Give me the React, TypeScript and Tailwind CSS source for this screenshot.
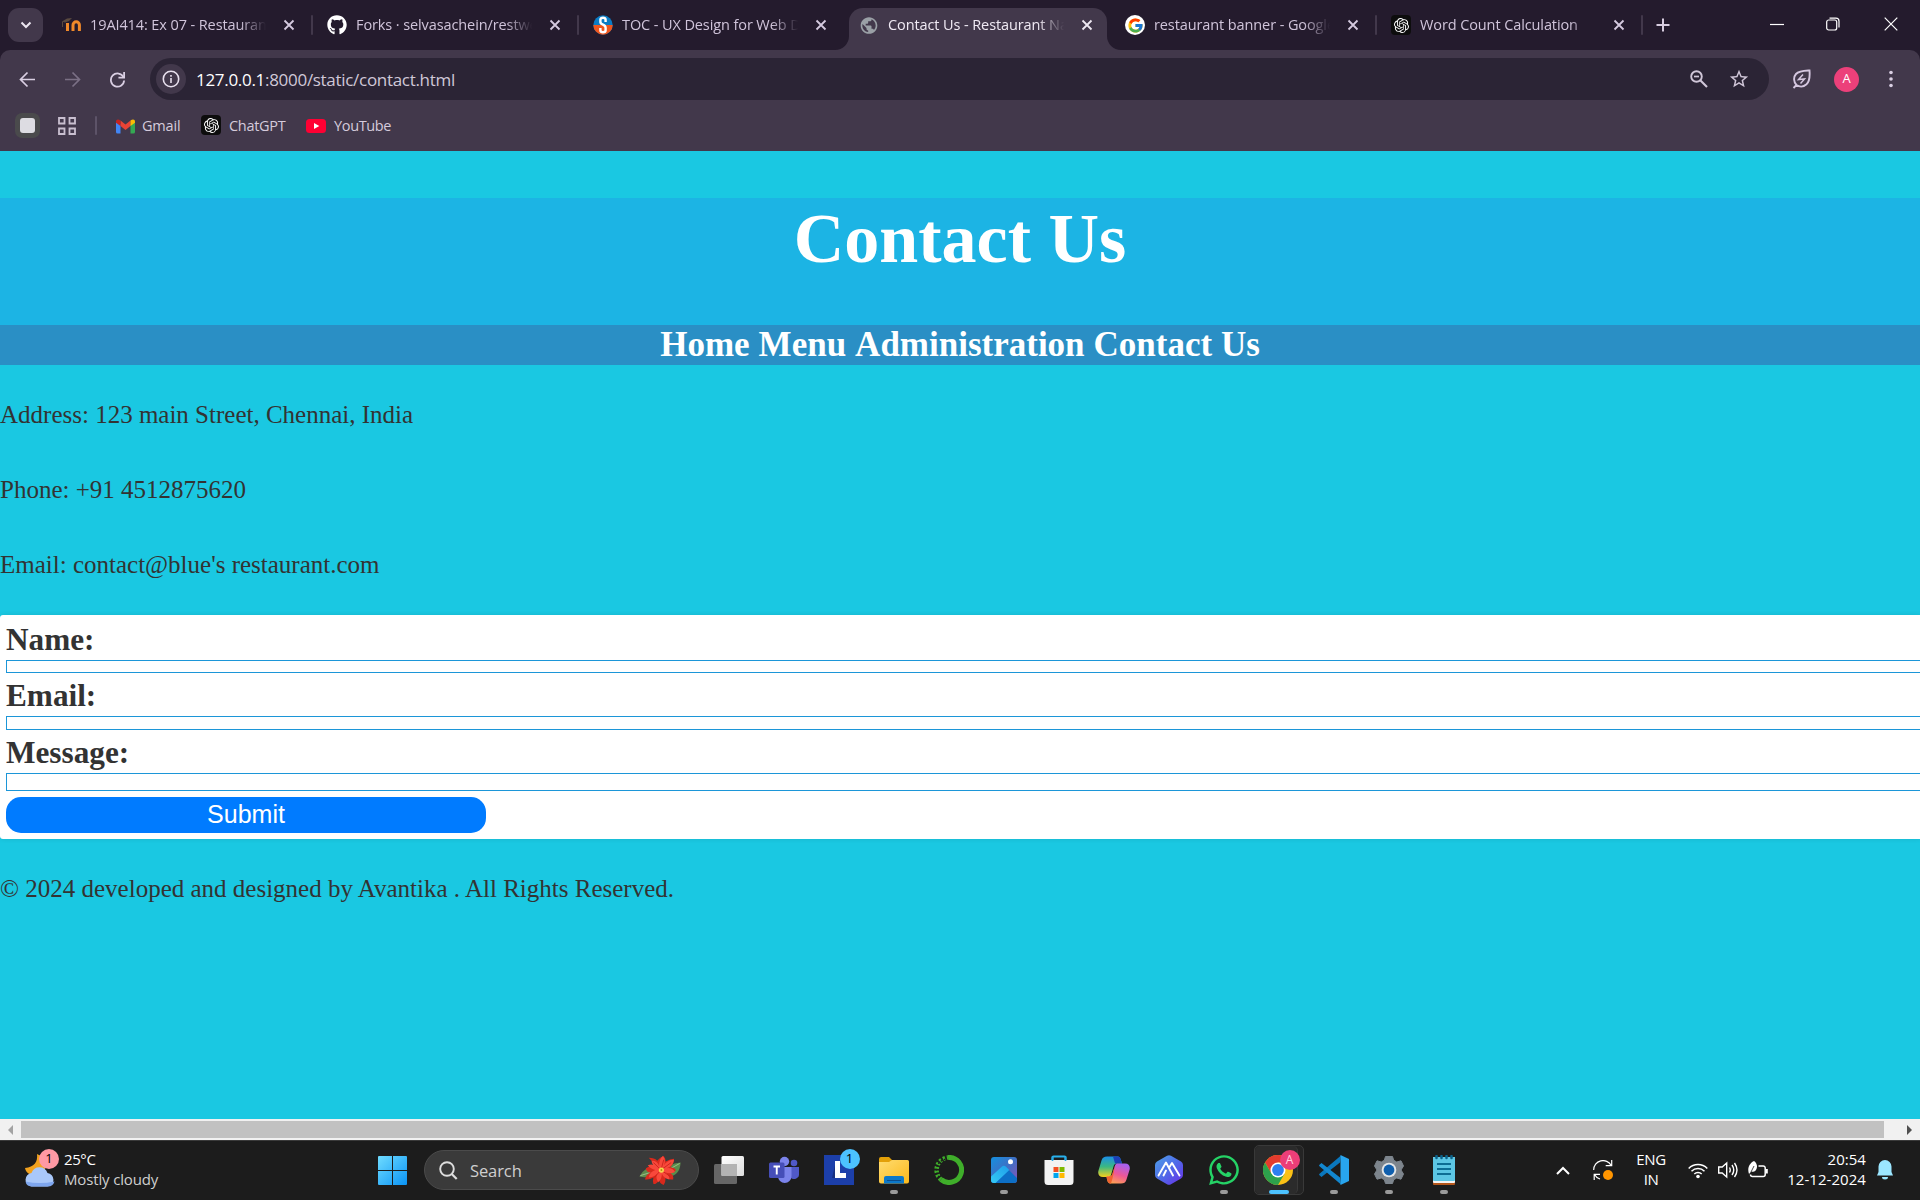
import type { ReactNode } from "react";
import { FaGithub, FaWhatsapp } from "react-icons/fa";
import { FcGoogle } from "react-icons/fc";
import { SiOpenai } from "react-icons/si";
import { MdStarBorder, MdPublic } from "react-icons/md";

const CloseX = ({ bright }: { bright?: boolean }) => (
  <svg width="12" height="12" viewBox="0 0 12 12" className={bright ? "text-[#eee8f2]" : "text-[#d5cadf]"}>
    <path d="M1.5 1.5l9 9M10.5 1.5l-9 9" stroke="currentColor" strokeWidth="1.8" />
  </svg>
);

const Moodle = () => (
  <svg width="20" height="20" viewBox="0 0 20 20">
    <path d="M6.500 16V8M12 16V10a3.200 3.200 0 0 1 6.400 0V16" fill="none" stroke="#f0892a" strokeWidth="3" />
    <path d="M1 6.500l5-3 5-.5-3 3-4 1.500z" fill="#5a4a40" />
    <path d="M1.500 6.500V12" stroke="#5a4a40" />
  </svg>
);

const SLogo = () => (
  <svg width="20" height="20" viewBox="0 0 20 20">
    <circle cx="10" cy="10" r="9.700" fill="#0b7cc4" />
    <path d="M.3 10a9.700 9.700 0 0 0 19.400 0z" fill="#f0561d" />
    <path d="M12.600 7V4.800q0-2-2.600-2t-2.600 2V7q0 1.600 2.600 2.700T12.600 12.800v2.400q0 2-2.600 2t-2.600-2V13" fill="none" stroke="#fff" strokeWidth="2.400" />
  </svg>
);

const GptTile = () => (
  <span className="flex size-5 items-center justify-center rounded-[4px] bg-[#0d0d0d]">
    <SiOpenai size={15} color="#fff" />
  </span>
);

type TabProps = { icon: ReactNode; title: string; active?: boolean; sep?: boolean };

const Tab = ({ icon, title, active, sep }: TabProps) => (
  <div
    className={
      "relative flex h-[42px] w-[258px] shrink-0 items-center rounded-t-[14px] pb-[8px] pl-[10px] " +
      (active ? "bg-[#42384b]" : "")
    }
  >
    <span className="flex size-5 shrink-0 items-center justify-center">{icon}</span>
    <span
      className={
        "ml-[9px] w-[178px] overflow-hidden whitespace-nowrap text-[14.5px] leading-[20px] tracking-[-0.1px] [mask-image:linear-gradient(to_right,black_84%,transparent_99%)] " +
        (active ? "text-[#f0eaf4]" : "text-[#d0c4da]")
      }
    >
      {title}
    </span>
    <span className="ml-[15px] flex">
      <CloseX bright={active} />
    </span>
    {sep && <span className="absolute top-[7px] -right-[4px] h-5 w-[2px] rounded bg-[#42384b]" />}
    {active && (
      <>
        <svg className="absolute bottom-0 -left-[14px]" width="14" height="14">
          <path d="M14 0v14H0A14 14 0 0 0 14 0z" fill="#42384b" />
        </svg>
        <svg className="absolute -right-[14px] bottom-0" width="14" height="14">
          <path d="M0 0v14h14A14 14 0 0 1 0 0z" fill="#42384b" />
        </svg>
      </>
    )}
  </div>
);

const TabStrip = () => (
  <div className="flex h-[50px] items-end bg-[#241b2d]">
    <button className="mb-[8px] ml-[8px] flex h-[34px] w-[35px] items-center justify-center rounded-[11px] bg-[#42384b]">
      <svg width="12" height="8" viewBox="0 0 12 8">
        <path d="M1.500 1.500L6 6l4.500-4.500" fill="none" stroke="#ece6f0" strokeWidth="2" />
      </svg>
    </button>
    <div className="ml-[8px] flex gap-[8px]">
      <Tab icon={<Moodle />} title="19AI414: Ex 07 - Restaurant Website" sep />
      <Tab icon={<FaGithub size={20} color="#fff" />} title="Forks · selvasachein/restweb" sep />
      <Tab icon={<SLogo />} title="TOC - UX Design for Web Dev" />
      <Tab icon={<MdPublic size={21} color="#9aa0a6" />} title="Contact Us - Restaurant Name" active />
      <Tab
        icon={
          <span className="flex size-5 items-center justify-center rounded-full bg-white">
            <FcGoogle size={17} />
          </span>
        }
        title="restaurant banner - Google Search"
        sep
      />
      <Tab icon={<GptTile />} title="Word Count Calculation" sep />
    </div>
    <svg className="mb-[18px] ml-[17px]" width="14" height="14">
      <path d="M7 .5v13M.5 7h13" stroke="#d8cde0" strokeWidth="2" />
    </svg>
    <div className="mr-[22px] mb-[18px] ml-auto flex h-4 items-center">
      <svg width="14" height="14">
        <path d="M0 7.500h14" stroke="#fff" strokeWidth="1.200" />
      </svg>
      <svg className="ml-[42px]" width="14" height="14" viewBox="0 0 14 14" fill="none" stroke="#fff" strokeWidth="1.200">
        <rect x=".7" y="3" width="10" height="10" rx="2" />
        <path d="M3.500 1.200h6.500a3 3 0 0 1 3 3V10.500" />
      </svg>
      <svg className="ml-[44px]" width="14" height="14">
        <path d="M.7.7l12.600 12.600M13.300.7L.7 13.300" stroke="#fff" strokeWidth="1.200" />
      </svg>
    </div>
  </div>
);

const Toolbar = () => (
  <div className="bg-[#241b2d]">
    <div className="flex h-[58px] items-center rounded-t-[10px] bg-[#42384b]">
      <svg className="ml-[19px]" width="17" height="17" viewBox="0 0 17 17" fill="none" stroke="#dacfe3" strokeWidth="1.700">
        <path d="M16 8.500H2M8.500 1.500l-7 7 7 7" />
      </svg>
      <svg className="ml-[28px]" width="17" height="17" viewBox="0 0 17 17" fill="none" stroke="#7b7085" strokeWidth="1.700">
        <path d="M1 8.500h14M8.500 1.500l7 7-7 7" />
      </svg>
      <svg className="ml-[28px]" width="17" height="17" viewBox="0 0 18 18" fill="none" stroke="#dacfe3" strokeWidth="1.900">
        <path d="M15.300 6.500A7 7 0 1 0 16 10" />
        <path d="M16 1v6h-6" />
      </svg>
      <div className="ml-[24px] flex h-[42px] w-[1619px] items-center rounded-full bg-[#2b2435] pl-[6px]">
        <span className="flex size-[30px] items-center justify-center rounded-full bg-[#42384b]">
          <svg width="18" height="18" viewBox="0 0 18 18" fill="none" stroke="#e8e0ee" strokeWidth="1.600">
            <circle cx="9" cy="9" r="7.700" />
            <path d="M9 8v5M9 5v1.700" />
          </svg>
        </span>
        <span className="ml-[10px] pt-px text-[17px] leading-[24px] tracking-[-0.3px] text-[#d0c8d8]">
          <span className="text-white">127.0.0.1</span>:8000/static/contact.html
        </span>
        <svg className="ml-auto" width="18" height="18" viewBox="0 0 18 18" fill="none" stroke="#d0c6d8">
          <circle cx="6.500" cy="6.500" r="5.300" strokeWidth="1.900" />
          <path d="M10.500 10.500l6.500 6.500" strokeWidth="2.100" />
          <path d="M4 6.500h5" strokeWidth="1.700" />
        </svg>
        <MdStarBorder className="mr-[19px] ml-[20px]" size={22} color="#d0c6d8" />
      </div>
      <svg className="ml-[23px]" width="20" height="20" viewBox="0 0 20 20" fill="none" stroke="#d5c7e0" strokeWidth="1.900">
        <path d="M4.500 16C1.500 13 1.300 8 4 5c3-3.200 7.500-3.200 13.500-3.500.5 6 .5 10.500-3 13.800-3 2.700-7 2.700-10 .7zM1.500 19l3-3" />
        <path d="M11 5.500L6.500 10.500l6-.5L8.500 14.500" strokeWidth="1.500" />
      </svg>
      <span className="ml-[22px] flex size-[25px] items-center justify-center rounded-full bg-[#ec407a] text-[13px] text-white">A</span>
      <svg className="ml-[29px]" width="6" height="18" fill="#dacfe3">
        <circle cx="3" cy="2.500" r="1.800" />
        <circle cx="3" cy="9" r="1.800" />
        <circle cx="3" cy="15.500" r="1.800" />
      </svg>
    </div>
    <div className="flex h-[43px] items-start bg-[#42384b] pt-[5px] text-[14.5px] leading-[25px] text-[#d5cbdc]">
      <span className="ml-[15px] flex size-[25px] items-center justify-center rounded-[7px] bg-[#4a4a4c]">
        <span className="size-[15px] rounded-[3px] bg-[#dddce2]" />
      </span>
      <svg className="mt-[4px] ml-[18px]" width="18" height="18" fill="none" stroke="#c9bfd0" strokeWidth="1.800">
        <path d="M1 1h5.500v5.500H1zM11.500 1H17v5.500h-5.500zM1 11.500h5.500V17H1zM11.500 11.500H17V17h-5.500z" />
      </svg>
      <span className="mt-[3px] ml-[19px] h-[19px] w-[2px] rounded bg-[#5d5368]" />
      <svg className="mt-[6px] ml-[19px]" width="19" height="15" viewBox="0 0 19 15">
        <path d="M0 2.500V13a1.500 1.500 0 0 0 1.500 1.500h3V5z" fill="#4285f4" />
        <path d="M19 2.500V13a1.500 1.500 0 0 1-1.500 1.500h-3V5z" fill="#34a853" />
        <path d="M4.500 1.500l5 4 5-4V7l-5 4-5-4z" fill="#ea4335" />
        <path d="M0 2.500C0 .3 2.300-.3 4.500 1.500V7L0 3.700z" fill="#c5221f" />
        <path d="M19 2.500c0-2.200-2.300-2.800-4.500-1V7L19 3.700z" fill="#fbbc04" />
      </svg>
      <span className="ml-[7px] w-[59px] tracking-[-0.2px]">Gmail</span>
      <span className="mt-[2px]"><GptTile /></span>
      <span className="ml-[8px] w-[77px] tracking-[-0.3px]">ChatGPT</span>
      <svg className="mt-[6px]" width="20" height="14" viewBox="0 0 20 14">
        <rect width="20" height="14" rx="3.500" fill="#ff0033" />
        <path d="M8 4l5.300 3L8 10z" fill="#fff" />
      </svg>
      <span className="ml-[8px] tracking-[-0.35px]">YouTube</span>
    </div>
  </div>
);

const Field = ({ label, box }: { label: string; box: string }) => (
  <>
    <label className="block h-[39px] pt-px text-[31.25px] leading-[36px] font-bold">{label}</label>
    <div className={"border border-r-0 border-[#1c96d8] bg-white " + box} />
  </>
);

const Page = () => (
  <main className="h-[968px] overflow-hidden bg-[#1ac8e2] pt-[47px] font-['Liberation_Serif',serif] text-[25px] leading-[28px] text-[#333333]">
    <header className="h-[127px] bg-[#1cb4e4] text-center">
      <h1 className="text-[70px] leading-[81px] font-bold text-white">Contact Us</h1>
    </header>
    <nav className="flex h-10 justify-center gap-[9px] bg-[#2a8fc5] text-[35px] leading-[40px] font-bold text-white">
      <a>Home</a>
      <a>Menu</a>
      <a>Administration</a>
      <a>Contact Us</a>
    </nav>
    <section className="my-9 flex flex-col gap-[47px]">
      <p>Address: 123 main Street, Chennai, India</p>
      <p>Phone: +91 4512875620</p>
      <p>Email: contact@blue's restaurant.com</p>
    </section>
    <form className="h-[224px] rounded-l-[3px] bg-white pt-[6px] pl-[6px] shadow-[0_0_5px_rgba(0,0,0,0.1)]">
      <Field label="Name:" box="h-[13px] mb-1" />
      <Field label="Email:" box="h-[14px] mb-1" />
      <Field label="Message:" box="h-[18px] mb-[6px]" />
      <button type="button" className="block h-9 w-[480px] rounded-[15px] bg-[#007bff] pb-px font-['Liberation_Sans',sans-serif] text-[25px] leading-[35px] text-white">
        Submit
      </button>
    </form>
    <footer className="mt-[36px]">© 2024 developed and designed by Avantika . All Rights Reserved.</footer>
  </main>
);

const ScrollBar = () => (
  <div className="flex h-[21px] items-center bg-[#f1f1f1]">
    <svg className="ml-[8px]" width="5" height="10"><path d="M5 0v10L0 5z" fill="#a3a3a3" /></svg>
    <div className="ml-[8px] h-[17px] w-[1863px] bg-[#c1c1c1]" />
    <svg className="ml-[23px]" width="5" height="10"><path d="M0 0v10l5-5z" fill="#505050" /></svg>
  </div>
);

const Poinsettia = () => (
  <svg width="46" height="30" viewBox="0 0 46 32">
    <path d="M1 23Q6 13 17 12L21 17Q13 26 1 23z" fill="#5d8a4b" />
    <path d="M45 8Q44 23 31 23L26 18Q31 9 45 8z" fill="#5a8e4c" />
    <path d="M2 22L18 17M44 9L28 18" stroke="#9fc08c" />
    <path d="M23 16L11 3q6 0 9 3 3-4 7-5 2 3 2 6 5-3 9-3 0 5-4 9 4 0 6 3-2 4-6 3 4 3 3 7-5 1-8-2 0 5-2 8-5-2-5-6-2 5-6 5-1-4 0-7-5 3-9 2 1-5 6-7-5-1-5-5 4-3 7-1z" fill="#d9291c" />
    <path d="M23 16Q14 12 14 6q7 0 8 6 0-8 4-11 4 4 1 10 4-6 11-6-1 7-8 9 6-1 9 4-6 3-11 0 5 3 5 8-6-1-8-6 0 6-4 9-3-5-1-9-4 4-9 4 1-6 7-8-5-1-8-5 5-2 8 1z" fill="#f8483b" />
    <path d="M24 16l3-11M24 16l10 7M24 16l-7 8M24 16l11-8M24 16l-8-8" stroke="#c01c14" strokeWidth=".8" />
    <circle cx="24.500" cy="16" r="2.800" fill="#f5d44c" />
    <circle cx="24.500" cy="16" r="1" fill="#b98a14" />
  </svg>
);

const TaskView = () => (
  <svg width="30" height="30">
    <defs>
      <linearGradient id="tv" x1="0" y1="0" x2="1" y2="1"><stop offset="0" stopColor="#fff" /><stop offset="1" stopColor="#dcdcdc" /></linearGradient>
    </defs>
    <rect y="9" width="23" height="20" rx="1.500" fill="#666" />
    <rect x="7.500" y="1" width="22.500" height="20" rx="1.500" fill="url(#tv)" />
    <path d="M7.500 9H23v12H7.500z" fill="#b3b3b3" />
  </svg>
);

const Teams = () => (
  <svg width="30" height="30" viewBox="0 0 30 30">
    <circle cx="25" cy="8" r="3.300" fill="#5059c9" />
    <path d="M20 12h10v8a5 5 0 0 1-8 3z" fill="#5059c9" />
    <circle cx="15.500" cy="6.500" r="4.700" fill="#7b83eb" />
    <path d="M9 12h13.500v9a6.750 7 0 0 1-13.500 0z" fill="#7b83eb" />
    <rect y="7.500" width="15.500" height="15.500" rx="1.500" fill="#464eb8" />
    <path d="M4.500 11.500h6.500M7.750 11.500v8" stroke="#fff" strokeWidth="1.900" />
  </svg>
);

const LApp = () => (
  <span className="relative flex size-[30px] items-center justify-center bg-[#1c3faa]">
    <svg width="30" height="30"><path d="M11 6h5v12h6v5H11z" fill="#fff" /><path d="M11 10l-3 13h3z" fill="#17307f" /></svg>
    <span className="absolute -top-[6px] left-4 flex size-5 items-center justify-center rounded-full bg-[#4cc2ff] text-[13px] text-black">1</span>
  </span>
);

const Explorer = () => (
  <svg width="30" height="30" viewBox="0 0 30 30">
    <defs>
      <linearGradient id="ex" x1="0" y1="0" x2="1" y2="1"><stop offset="0" stopColor="#ffdc70" /><stop offset="1" stopColor="#fbb91c" /></linearGradient>
    </defs>
    <path d="M0 4a2 2 0 0 1 2-2h8l3 3v5H0z" fill="#e3a008" />
    <path d="M0 7h10l3-2h15.500A1.500 1.500 0 0 1 30 6.500v20a2 2 0 0 1-2 2H2a2 2 0 0 1-2-2z" fill="url(#ex)" />
    <path d="M5 23a2 2 0 0 1 2-2h16a2 2 0 0 1 2 2v5.500H5z" fill="#0c78c9" />
    <path d="M8 25.500h14" stroke="#0a4d8c" />
  </svg>
);

const Anaconda = () => (
  <svg width="30" height="30" viewBox="0 0 30 30" fill="none" stroke="#3fae2a">
    <path d="M14 2.500a12.500 12.500 0 1 1-7 22" strokeWidth="5" />
    <path d="M7 24.500A12.500 12.500 0 0 1 14 2.500" strokeWidth="4.500" strokeDasharray="2.200 1.800" />
    <path d="M5 22A11 11 0 0 1 13 4" strokeWidth="1.200" stroke="#1c1c1c" strokeDasharray="1.500 2" />
  </svg>
);

const Photos = () => (
  <svg width="26" height="26" viewBox="0 0 26 26">
    <defs>
      <linearGradient id="ph" x1="0" y1="0" x2="1" y2="1"><stop offset="0" stopColor="#1490df" /><stop offset=".5" stopColor="#3f6fc4" /><stop offset="1" stopColor="#8c52b5" /></linearGradient>
      <linearGradient id="pm" x1="0" y1="1" x2="1" y2="0"><stop offset="0" stopColor="#35c9f4" /><stop offset="1" stopColor="#1fa0ea" /></linearGradient>
    </defs>
    <rect width="26" height="26" rx="3" fill="url(#ph)" />
    <path d="M0 20L10.500 10.500a3.500 3.500 0 0 1 4.800 0L26 21v2a3 3 0 0 1-3 3H3a3 3 0 0 1-3-3z" fill="#0d6fc6" />
    <path d="M0 19.500L10.500 10a3.500 3.500 0 0 1 4.800 0l3 3L4.500 26H3a3 3 0 0 1-3-3z" fill="url(#pm)" />
    <circle cx="19.500" cy="4.700" r="2.500" fill="#fff" />
  </svg>
);

const Store = () => (
  <svg width="30" height="30" viewBox="0 0 30 30">
    <path d="M8.500 7V2.500a1 1 0 0 1 1-1h11a1 1 0 0 1 1 1V7" fill="none" stroke="#28b2ee" strokeWidth="2.200" />
    <path d="M.5 5h29v21.500a3.500 3.500 0 0 1-3.500 3.500H4a3.500 3.500 0 0 1-3.500-3.500z" fill="#f3f3f3" />
    <path d="M8.500 1.500V6M21.500 1.500V6" stroke="#28a9e3" strokeWidth="1.600" />
    <path d="M9.500 12h5v5h-5z" fill="#f25022" /><path d="M15.500 12h5v5h-5z" fill="#7fba00" />
    <path d="M9.500 18h5v5h-5z" fill="#00a4ef" /><path d="M15.500 18h5v5h-5z" fill="#ffb900" />
  </svg>
);

const Copilot = () => (
  <svg width="32" height="30" viewBox="0 0 32 30">
    <defs>
      <linearGradient id="ca" x1="0" y1="0" x2="0" y2="1"><stop offset="0" stopColor="#1b8fe8" /><stop offset=".5" stopColor="#3bb882" /><stop offset="1" stopColor="#f5d01c" /></linearGradient>
      <linearGradient id="cb" x1="0.600" y1="0" x2=".2" y2="1"><stop offset="0" stopColor="#a860ee" /><stop offset=".5" stopColor="#ee5796" /><stop offset="1" stopColor="#ffa64d" /></linearGradient>
    </defs>
    <path d="M9 1.500h10c3 0 3.500 2 4.200 4.500L24 8.500h-5c-2 0-3 1-3.500 3L13 20c-.6 1.500-1.500 2-3 2H5c-4 0-5.500-3-4.500-6.500l3-10C4.500 2.500 6 1.500 9 1.500z" fill="url(#ca)" />
    <path d="M15 1.500h4c3 0 3.500 2 4.200 4.500L24 8.500h-7z" fill="#1c3fb8" />
    <path d="M23 28.500H13c-3 0-3.500-2-4.200-5L8.500 21.500H11c2 0 3-1 3.500-3L17 10.500c.6-1.500 1.500-2 3-2h7c4 0 5.500 3 4.500 6.500l-3 9.500c-1 3-2.500 4-5.500 4z" fill="url(#cb)" />
    <path d="M8.500 21.500H11c2 0 3-1 3.500-3L17 10.500c-1 6-2 12-4 18-3 0-3.500-2-4.500-7z" fill="#f0622d" />
  </svg>
);

const HexA = () => (
  <svg width="28" height="30" viewBox="0 0 28 30">
    <defs>
      <linearGradient id="hx" x1="0" y1="0" x2="1" y2="1"><stop offset="0" stopColor="#4fa2e8" /><stop offset=".5" stopColor="#4f6be8" /><stop offset="1" stopColor="#6a2de8" /></linearGradient>
    </defs>
    <path d="M12 .8a4 4 0 0 1 4 0l10 5.700a4 4 0 0 1 2 3.500v10a4 4 0 0 1-2 3.500l-10 5.700a4 4 0 0 1-4 0L2 23.500A4 4 0 0 1 0 20V10a4 4 0 0 1 2-3.500z" fill="url(#hx)" />
    <path d="M3.500 20.500L11 7.500l7 13M8.500 20.500l2.500-5M14.500 12l2.500-4 7.500 12.500" fill="none" stroke="#fff" strokeWidth="1.900" strokeLinecap="round" strokeLinejoin="round" />
  </svg>
);

const Chrome = () => (
  <span className="relative flex h-[50px] w-[50px] items-center justify-center rounded-[5px] border border-[#393939] bg-[#242424]">
    <span className="absolute top-0 left-0 h-12 w-[43px] rounded-[5px] border-r border-[#393939] bg-[#2b2b2b]" />
    <svg className="relative -ml-px" width="30" height="30" viewBox="0 0 30 30">
      <circle cx="15" cy="15" r="15" fill="#fbc116" />
      <path d="M2 7.500A15 15 0 0 1 28 7.500H15L8.500 18.700z" fill="#e33b2e" />
      <path d="M2 7.500A15 15 0 0 0 15 30l6.500-11.250L8.500 18.750z" fill="#2da14c" />
      <circle cx="15" cy="15" r="7.500" fill="#fff" />
      <circle cx="15" cy="15" r="5.900" fill="#2d7ff0" />
    </svg>
    <span className="absolute top-[4px] left-[25px] flex size-5 items-center justify-center rounded-full bg-[#ec3e78] text-[12px] text-[#ffd3e1]">A</span>
  </span>
);

const VsCode = () => (
  <svg width="30" height="30" viewBox="0 0 30 30">
    <path d="M21 7.500L2.500 22 .5 20.200a1 1 0 0 1 0-1.500L22 .5z" fill="#0a77bd" />
    <path d="M21 22.500L2.500 8 .5 9.800a1 1 0 0 0 0 1.500L22 29.500z" fill="#1287d0" />
    <path d="M21.500 0L30 4v22l-8.500 4z" fill="#28a5ee" />
  </svg>
);

const Settings = () => (
  <svg width="30" height="30" viewBox="0 0 30 30">
    <path d="M11.500 1.500h7l1.200 3.800 3 1.700 4.300-1.200 2.500 5.200L27 15l2.500 4-2.500 5.200-4.300-1.200-3 1.700-1.200 3.800h-7l-1.200-3.800-3-1.700L3 24.200.5 19 3 15 .5 11 3 5.800 7.300 7l3-1.700z" fill="#7d858d" stroke="#7d858d" strokeLinejoin="round" />
    <circle cx="15" cy="15" r="7.300" fill="#e4e6e8" />
    <circle cx="15" cy="15" r="5.400" fill="#0f5fae" />
  </svg>
);

const Notepad = () => (
  <svg width="22" height="30" viewBox="0 0 22 30">
    <rect y="26" width="22" height="4" rx="1" fill="#b4561a" />
    <rect y="2" width="22" height="26" rx="1" fill="#f3f3f3" />
    <rect y="2" width="22" height="24" rx="1" fill="#5cc6e4" />
    <path d="M3.500 1v2M8.500 1v2M13.500 1v2M18.500 1v2" stroke="#0b6289" strokeWidth="2.500" strokeLinecap="round" />
    <path d="M4 9h14M4 14h14M4 19h14" stroke="#0d6d94" strokeWidth="2" />
  </svg>
);

const TaskItem = ({ children, mark }: { children: ReactNode; mark?: string }) => (
  <div className="relative flex h-[60px] w-[55px] shrink-0 items-center justify-center">
    {children}
    {mark && <span className={"absolute bottom-[6px] h-1 rounded-full " + mark} />}
  </div>
);

const run = "w-2 bg-[#9a9a9a]";

const TaskBar = () => (
  <div className="flex h-[60px] items-center border-t border-[#3a3a3a] bg-[#1c1c1c] pb-px text-[15px] text-white">
    <div className="flex w-[378px] items-center">
      <div className="relative mb-[3px] ml-[24px] h-[38px] w-[34px]">
        <svg width="34" height="38" viewBox="0 0 34 38">
          <path d="M13 4c1 8-3 13-12 14 1 6 7 8 13 7s9-7 7-13S17 6 13 4z" fill="#f2a21f" />
          <path d="M7.500 36.500a6.800 6.800 0 0 1 0-13.500 8.500 8.500 0 0 1 16 0 6.800 6.800 0 0 1 0 13.500z" fill="#a9c8fa" />
          <path d="M1.500 31.500q14 3 29 0a7 7 0 0 1-7 5H7.500a6.500 6.500 0 0 1-6-5z" fill="#7ea6ee" />
        </svg>
        <span className="absolute -top-[1px] left-[15px] flex size-5 items-center justify-center rounded-full bg-[#ff99a4] text-[13px] text-black">1</span>
      </div>
      <div className="mb-[3px] ml-[6px] leading-[20px]">
        <div className="tracking-[-0.4px]">25°C</div>
        <div className="tracking-[-0.15px] text-[#cfcfcf]">Mostly cloudy</div>
      </div>
    </div>
    <svg width="29" height="29" viewBox="0 0 29 29">
      <defs>
        <linearGradient id="wl" x1="0" y1="0" x2="1" y2="1"><stop offset="0" stopColor="#6fdcff" /><stop offset="1" stopColor="#0a93f5" /></linearGradient>
      </defs>
      <path d="M0 1a1 1 0 0 1 1-1h13v14H0zM15 0h13a1 1 0 0 1 1 1v13H15zM0 15h14v14H1a1 1 0 0 1-1-1zM15 15h14v13a1 1 0 0 1-1 1H15z" fill="url(#wl)" />
    </svg>
    <div className="ml-[17px] flex h-10 w-[275px] items-center rounded-full border border-[#4b4b4b] bg-[#3a3a3a] pl-[14px]">
      <svg width="19" height="19" viewBox="0 0 19 19" fill="none" stroke="#dedede">
        <circle cx="8" cy="8" r="6.800" strokeWidth="1.900" />
        <path d="M12.700 13l5 5" strokeWidth="2.200" />
      </svg>
      <span className="ml-[12px] pt-[2px] text-[16.500px] tracking-[-0.1px] text-[#cfcfcf]">Search</span>
      <span className="mr-[15px] ml-auto"><Poinsettia /></span>
    </div>
    <div className="ml-[2px] flex">
      <TaskItem><TaskView /></TaskItem>
      <TaskItem><Teams /></TaskItem>
      <TaskItem><LApp /></TaskItem>
      <TaskItem mark={run}><Explorer /></TaskItem>
      <TaskItem><Anaconda /></TaskItem>
      <TaskItem mark={run}><Photos /></TaskItem>
      <TaskItem><Store /></TaskItem>
      <TaskItem><Copilot /></TaskItem>
      <TaskItem><HexA /></TaskItem>
      <TaskItem mark={run}><FaWhatsapp size={34} color="#25d366" /></TaskItem>
      <TaskItem mark="w-5 bg-[#4cc2ff]"><Chrome /></TaskItem>
      <TaskItem mark={run}><VsCode /></TaskItem>
      <TaskItem mark={run}><Settings /></TaskItem>
      <TaskItem mark={run}><Notepad /></TaskItem>
    </div>
    <svg className="ml-[85px]" width="14" height="9" fill="none" stroke="#fff" strokeWidth="2"><path d="M1 8l6-6 6 6" /></svg>
    <svg className="ml-[23px]" width="20" height="20" viewBox="0 0 20 20" fill="none" stroke="#fff" strokeWidth="1.200">
      <path d="M.7 10a9.300 9.300 0 0 1 17.500-4.500M18.700 0v5.700h-6M7 19a9.300 9.300 0 0 1-5.500-4.500M1.200 20v-5.700H7" />
      <circle cx="15" cy="15" r="5" fill="#ff9500" stroke="none" />
    </svg>
    <div className="mb-[2px] ml-[20px] w-[36px] text-center leading-[20px] tracking-[-0.4px]">ENG<br />IN</div>
    <svg className="ml-[19px]" width="20" height="17" viewBox="0 0 20 17" fill="none" stroke="#fff" strokeWidth="1.500">
      <path d="M.7 6.500a13 13 0 0 1 18.600 0M3.500 9.300a9.200 9.200 0 0 1 13 0M6.300 12a5.300 5.300 0 0 1 7.400 0" />
      <circle cx="10" cy="14.500" r="1.800" fill="#fff" stroke="none" />
    </svg>
    <svg className="ml-[10px]" width="20" height="18" viewBox="0 0 20 18" fill="none" stroke="#fff" strokeWidth="1.400">
      <path d="M.7 6v6h3.500l4.500 4V2L4.200 6zM11.500 6.500q1.500 2.500 0 5M14 4q3.500 5 0 10M16.500 2q5 7 0 14" />
    </svg>
    <svg className="ml-[10px]" width="20" height="18" viewBox="0 0 20 18" fill="none" stroke="#fff" strokeWidth="1.500">
      <path d="M10.500 5h4.700a2 2 0 0 1 2 2v6.500a2 2 0 0 1-2 2H4.500a2 2 0 0 1-2-2" />
      <path d="M18.800 8v4.500" strokeWidth="2" />
      <path d="M6 0c3 2 4 6 2 9-1.500 2-4 2-5 1.700L1 13C-.5 9 0 3 6 0z" fill="#fff" stroke="none" />
      <path d="M3 11L6 5" stroke="#1c1c1c" strokeWidth=".8" />
    </svg>
    <div className="mb-[3px] ml-auto text-right leading-[20px] tracking-[0.05px]">20:54<br />12-12-2024</div>
    <svg className="mr-[27px] ml-[11px]" width="16" height="20" viewBox="0 0 16 20">
      <path d="M8 0a6.500 6.500 0 0 1 6.500 6.500V12l1.500 3.500H0L1.500 12V6.500A6.500 6.500 0 0 1 8 0zM5 17h6a3 2.500 0 0 1-6 0z" fill="#9be6ff" />
    </svg>
  </div>
);

export default function App() {
  return (
    <div className="flex h-[1200px] w-[1920px] flex-col overflow-hidden font-['Open_Sans','Noto_Sans',sans-serif]">
      <TabStrip />
      <Toolbar />
      <Page />
      <ScrollBar />
      <TaskBar />
    </div>
  );
}
